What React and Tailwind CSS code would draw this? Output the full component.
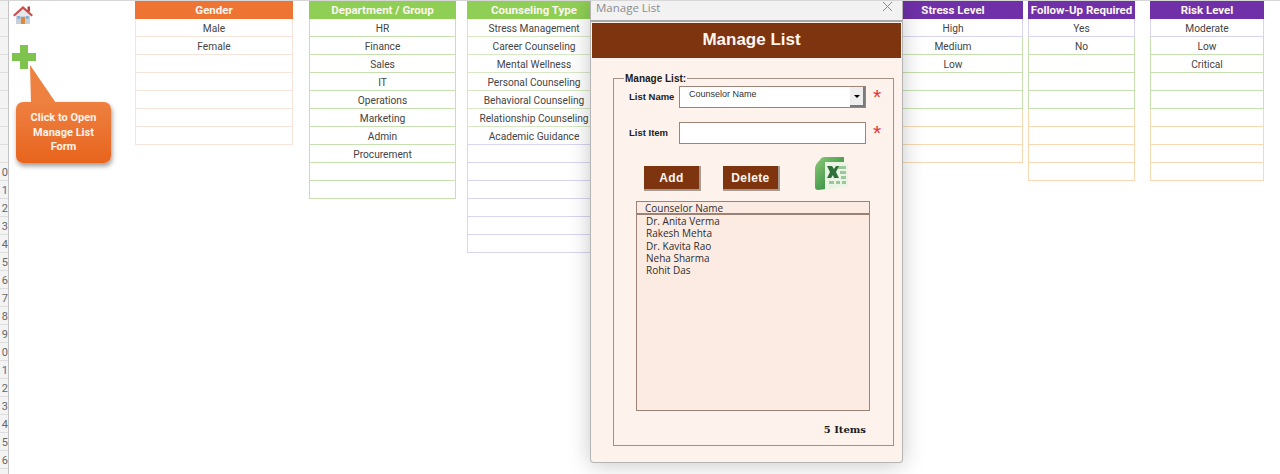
const LAV = "border-[#d9d5f0]";
const GRN = "border-[#c6e0b0]";
const ORG = "border-[#f8d9b4]";
const PCH = "border-[#f6e3da]";
const LGN = "border-[#d6e8c4]";

const purpleRows = (n) =>
  Array.from({ length: n }, (_, i) => (i < 1 ? LAV : i < 5 ? GRN : ORG));

const columns = [
  {
    title: "Gender",
    head: "bg-[#ee7434]",
    box: "w-[158px]",
    items: ["Male", "Female"],
    rows: Array(7).fill(PCH),
  },
  {
    title: "Department / Group",
    head: "bg-[#8fcf55]",
    box: "w-[147px] ml-[16px]",
    items: ["HR", "Finance", "Sales", "IT", "Operations", "Marketing", "Admin", "Procurement"],
    rows: Array(10).fill(GRN),
  },
  {
    title: "Counseling Type",
    head: "bg-[#8fcf55]",
    box: "w-[134px] ml-[11px]",
    items: [
      "Stress Management",
      "Career Counseling",
      "Mental Wellness",
      "Personal Counseling",
      "Behavioral Counseling",
      "Relationship Counseling",
      "Academic Guidance",
    ],
    rows: Array.from({ length: 13 }, (_, i) => (i < 6 ? LGN : LAV)),
  },
  {
    title: "Stress Level",
    head: "bg-[#7030a8]",
    box: "w-[140px] ml-[282px]",
    items: ["High", "Medium", "Low"],
    rows: purpleRows(8),
  },
  {
    title: "Follow-Up Required",
    head: "bg-[#7030a8]",
    box: "w-[107px] ml-[5px]",
    items: ["Yes", "No"],
    rows: purpleRows(9),
  },
  {
    title: "Risk Level",
    head: "relative bg-[#7030a8]",
    box: "w-[114px] ml-[15px]",
    items: ["Moderate", "Low", "Critical"],
    rows: purpleRows(9),
    topBar: true,
  },
];

function ListColumn({ col }) {
  return (
    <div className={`shrink-0 ${col.box}`}>
      <div className={`h-[18px] ${col.head} text-center text-[11.5px] leading-[19px] font-bold text-[#fdf6ef] whitespace-nowrap`}>
        {col.topBar && <span className="absolute left-0 right-0 -top-px h-px bg-[#4b5a52]" />}
        {col.title}
      </div>
      {col.rows.map((border, i) => (
        <div
          key={i}
          className={`h-[18px] border-x border-b-[1.5px] ${border} text-center text-[10.2px] leading-[19px] text-[#444444] whitespace-nowrap`}
        >
          {col.items[i] || ""}
        </div>
      ))}
    </div>
  );
}

function RowGutter() {
  const rows = Array.from({ length: 26 }, (_, i) => i + 1);
  return (
    <div className="w-[9px] shrink-0 h-[474px] overflow-hidden bg-[#f3f3f3] border-r border-[#c4c4c4]">
      {rows.map((n) => (
        <div
          key={n}
          className={`h-[18px] border-b border-[#dedede] flex justify-end text-[11px] leading-[19px] ${
            n % 10 === 1 && n > 10 ? "text-[#4a6f9c]" : "text-[#666666]"
          }`}
        >
          {n >= 10 ? n % 10 : ""}
        </div>
      ))}
    </div>
  );
}

function HomeIcon() {
  return (
    <svg width="22" height="20" viewBox="0 0 22 20">
      <path d="M4 9 L11 3 L18 9 V19 H4 Z" fill="#c9cfd6" />
      <path d="M4 9 L11 3 L18 9 V11 H4 Z" fill="#e6e9ec" />
      <path d="M1 10 L11 1 L21 10 L19.5 11.5 L11 4 L2.5 11.5 Z" fill="#c9504f" />
      <rect x="15.5" y="1.5" width="2.5" height="5" fill="#b9423f" />
      <rect x="9" y="12" width="4" height="7" fill="#d98a3d" />
      <rect x="5.5" y="11" width="2.5" height="3" fill="#7fb0d8" />
      <rect x="14" y="11" width="2.5" height="3" fill="#7fb0d8" />
    </svg>
  );
}

function PlusIcon() {
  return (
    <svg width="24" height="24" viewBox="0 0 24 24">
      <path d="M8 0 H16 V8 H24 V16 H16 V24 H8 V16 H0 V8 H8 Z" fill="#7fc34f" />
    </svg>
  );
}

function ExcelIcon() {
  return (
    <svg width="34" height="34" viewBox="0 0 34 34">
      <defs>
        <linearGradient id="xl" x1="0" y1="0" x2="1" y2="1">
          <stop offset="0" stopColor="#8ccb78" />
          <stop offset="1" stopColor="#1c7a32" />
        </linearGradient>
      </defs>
      <path d="M5 3 Q6 0 10 0 H29 V6 H14 Q11 6 11 10 V32 L3 33 Q0 33 0 30 V11 Q1 6 5 3 Z" fill="url(#xl)" />
      <path d="M10 5 H29 L33 7 V29 L10 33 Z" fill="#eaf3e4" />
      <path d="M23 9 H31 V12 H23 Z M25 14 H31 V17 H25 Z M26 19 H31 V22 H26 Z M14 24 H19 V27 H14 Z M21 24 H25 V27 H21 Z M27 24 H31 V27 H27 Z" fill="#9cc79a" />
      <path d="M12 9 H17 L19 12 L21 9 H24 L21 15 L24 21 H19 L18 18 L16 21 H12 L15 15 Z" fill="#2f6f3a" />
    </svg>
  );
}

function ManageListDialog() {
  const names = ["Dr. Anita Verma", "Rakesh Mehta", "Dr. Kavita Rao", "Neha Sharma", "Rohit Das"];
  return (
    <div className="absolute left-[590px] -top-px w-[313px] h-[463px] flex flex-col bg-[#fdf3ec] rounded-b-[4px] border-x border-b border-[#b4b4b4] shadow-[0_2px_22px_rgba(0,0,0,0.22)] font-['Liberation_Sans',sans-serif]">
      {/* Title bar */}
      <div className="h-[22px] shrink-0 bg-[#f2f2f2] border-b-2 border-[#a8a8a8] flex items-start justify-between pl-[5px] pr-[9px]">
        <span className="text-[11.5px] leading-[15px] text-[#8c8c8c] font-['Open_Sans',sans-serif]">Manage List</span>
        <svg className="mt-px" width="11" height="11" viewBox="0 0 11 11">
          <path d="M1 1 L10 10 M10 1 L1 10" stroke="#8a8a8a" strokeWidth="1" />
        </svg>
      </div>

      <div className="mx-px mt-px pl-[10px] h-[35px] shrink-0 bg-[#7f3410] text-center text-[17px] leading-[34px] font-bold text-[#fdf6ef]">
        Manage List
      </div>

      {/* Group box */}
      <fieldset className="ml-[22px] mt-[15px] w-[281px] h-[373px] border border-[#a58f82] pl-[15px] pr-[10px]">
        <legend className="-ml-[5px] px-px text-[10px] leading-[11px] font-bold text-[#1a1a1a]">
          Manage List:
        </legend>

        <div className="flex items-center h-[22px] mt-[2px]">
          <span className="w-[50px] text-[9.5px] font-bold text-[#222222] whitespace-nowrap">List Name</span>
          <div className="w-[187px] h-[22px] bg-white border border-[#9c8577] flex justify-between">
            <span className="pl-[9px] text-[9px] leading-[14px] text-[#333333]">Counselor Name</span>
            <span className="w-[15px] h-[20px] bg-[#eeeeee] border-r-2 border-b-2 border-[#7a7a7a] flex items-center justify-center">
              <span className="w-0 h-0 border-x-[3px] border-t-[3px] border-x-transparent border-t-black" />
            </span>
          </div>
          <span className="ml-[7px] h-[20px] text-[21px] leading-[20px] text-[#e0303a]">*</span>
        </div>

        <div className="flex items-center h-[22px] mt-[14px]">
          <span className="w-[50px] text-[9.5px] font-bold text-[#222222] whitespace-nowrap">List Item</span>
          <div className="w-[187px] h-[22px] bg-white border border-[#9c8577]" />
          <span className="ml-[7px] h-[20px] text-[21px] leading-[20px] text-[#e0303a]">*</span>
        </div>

        <div className="flex items-center h-[34px] mt-[13px] ml-[15px]">
          <button className="w-[57px] h-[25px] mt-[9px] bg-[#7f3410] border-r-2 border-b-2 border-[#a39a92] text-[12px] font-bold text-[#fdf6ef] tracking-[0.4px]">
            Add
          </button>
          <button className="w-[57px] h-[25px] mt-[9px] ml-[22px] bg-[#7f3410] border-r-2 border-b-2 border-[#a39a92] text-[12px] font-bold text-[#fdf6ef] tracking-[0.4px]">
            Delete
          </button>
          <span className="ml-[35px]">
            <ExcelIcon />
          </span>
        </div>

        {/* List box */}
        <div className="ml-[7px] mt-[10px] w-[234px] h-[210px] bg-[#fcebe2] border border-[#9a8375] text-[10px] text-[#2e2e2e] font-['Open_Sans',sans-serif]">
          <div className="h-[13px] pl-[8px] leading-[13px] border-b-2 border-[#9a8375]">Counselor Name</div>
          {names.map((name) => (
            <div key={name} className="h-[12.3px] pl-[9px] leading-[12.3px]">
              {name}
            </div>
          ))}
        </div>

        <div className="mt-[11px] mr-[17px] text-right text-[10px] font-bold text-[#1a1a1a] font-['DejaVu_Serif',serif]">
          5 Items
        </div>
      </fieldset>
    </div>
  );
}

export default function App() {
  return (
    <div className="relative w-[1280px] h-[474px] overflow-hidden bg-white border-t border-[#d6d6d6] font-['Roboto',sans-serif] flex">
      <RowGutter />

      {/* Shapes sitting on the sheet */}
      <div className="w-[126px] shrink-0">
        <div className="ml-[3px] mt-[4px]">
          <HomeIcon />
        </div>
        <div className="ml-[3px] mt-[20px]">
          <PlusIcon />
        </div>
        <div className="relative ml-[7px] mt-[33px] w-[95px] h-[61px] pt-px rounded-[7px] bg-gradient-to-b from-[#ee8040] to-[#e8641c] shadow-[1px_3px_5px_rgba(0,0,0,0.4)] flex items-center justify-center text-center text-[11px] leading-[14.5px] font-bold text-[#fdf3ea]">
          <svg className="absolute left-[13px] -top-[37px]" width="28" height="38" viewBox="0 0 28 38">
            <path d="M1 0 L27 38 H2 Z" fill="#ee8040" />
          </svg>
          <span className="relative">
            Click to Open
            <br />
            Manage List
            <br />
            Form
          </span>
        </div>
      </div>

      {columns.map((col) => (
        <ListColumn key={col.title} col={col} />
      ))}

      <ManageListDialog />
    </div>
  );
}
